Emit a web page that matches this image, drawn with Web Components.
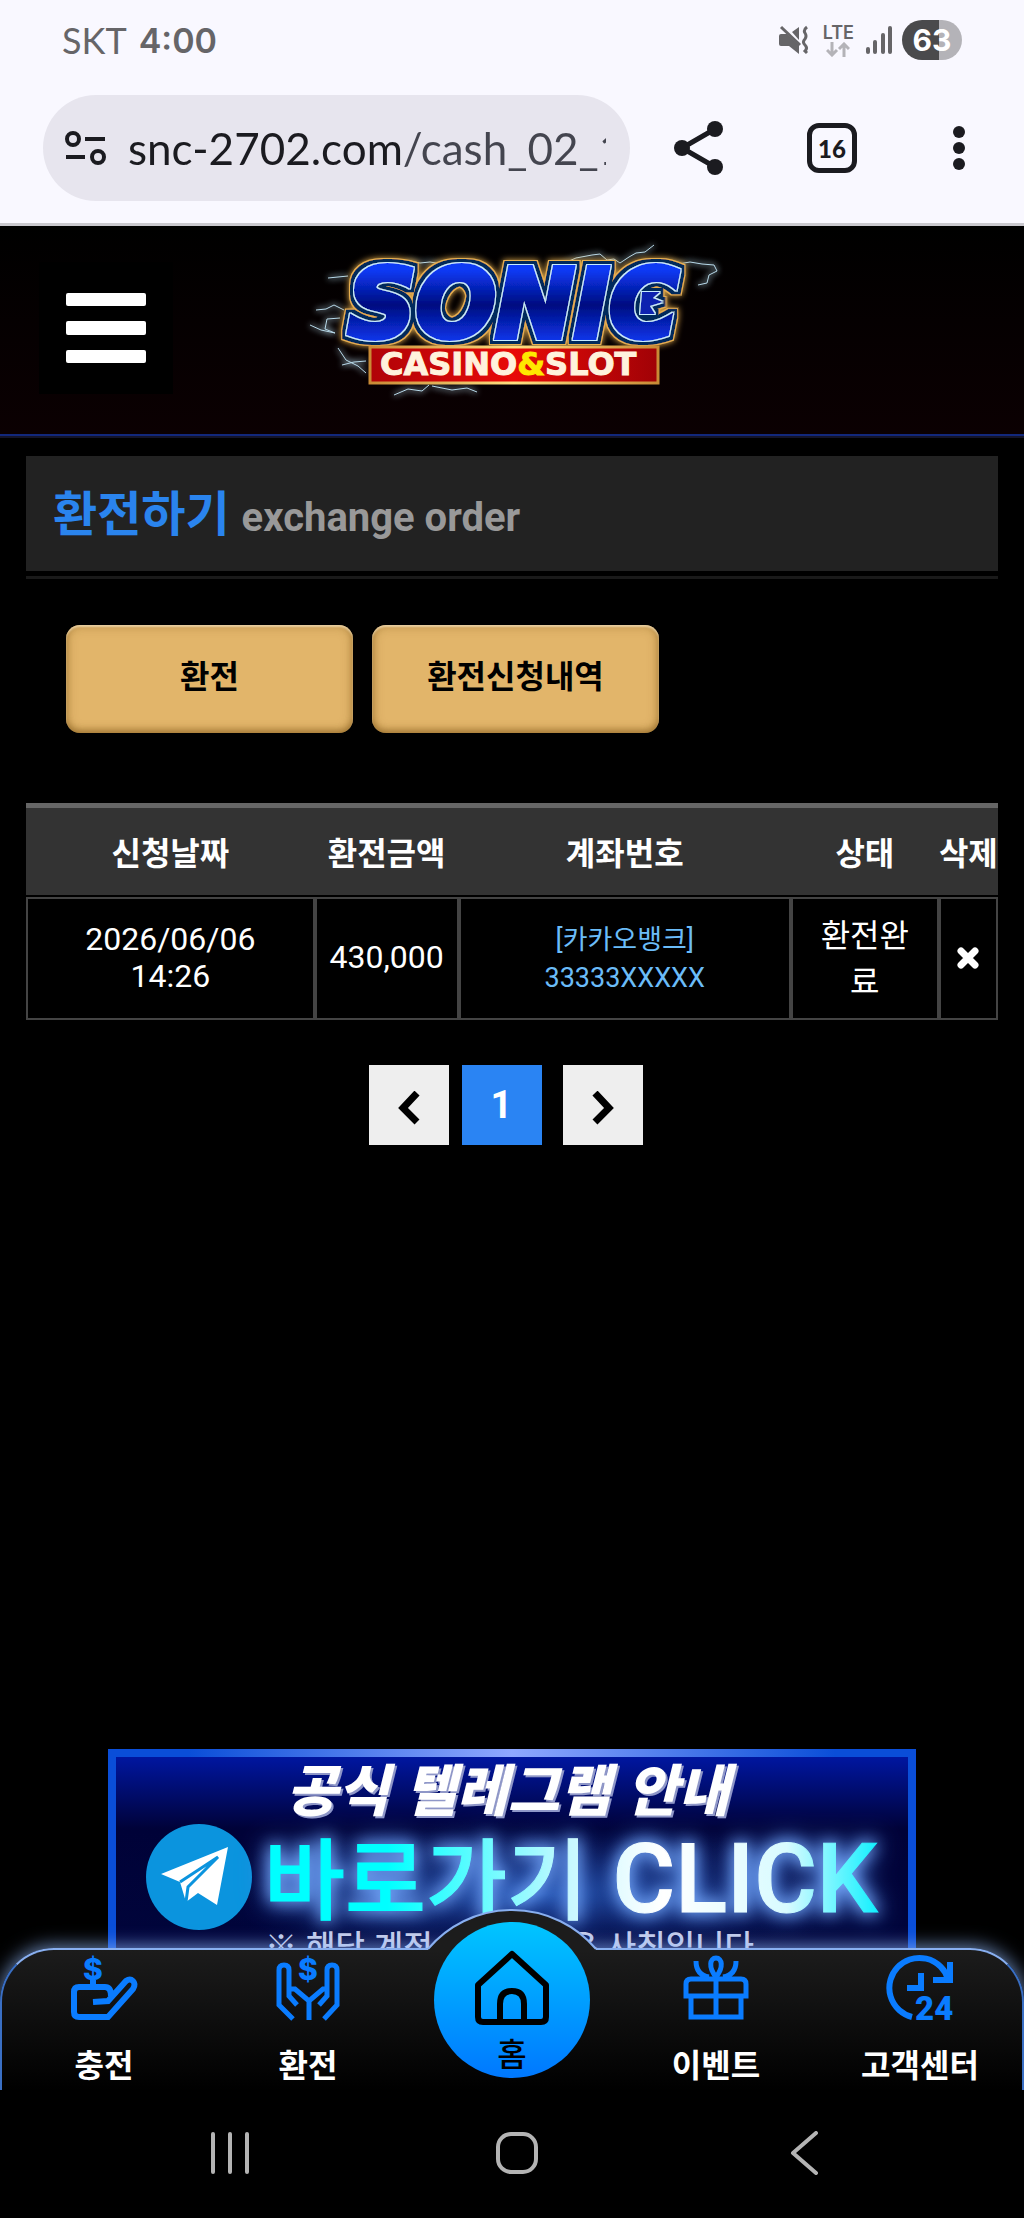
<!DOCTYPE html>
<html lang="ko">
<head>
<meta charset="UTF-8">
<meta name="viewport" content="width=device-width, initial-scale=1.0">
<title>환전하기</title>
<style>
  body {
    margin: 0;
    min-height: 100vh;
    display: flex;
    flex-direction: column;
    background-color: #000;
    color: #fff;
    font-family: Roboto, "Noto Sans CJK KR", sans-serif;
    font-size: 32px;
  }

  main {
    flex: 1;
    padding: 18px 26px 0;
  }

  .tabs {
    display: flex;
    gap: 19px;
    padding: 46px 40px 70px;
  }
</style>
</head>
<body>
<status-bar></status-bar>
<browser-bar></browser-bar>
<site-header></site-header>
<main>
  <page-title>환전하기<span slot="sub">exchange order</span></page-title>
  <div class="tabs">
    <gold-button>환전</gold-button>
    <gold-button>환전신청내역</gold-button>
  </div>
  <exchange-table></exchange-table>
  <page-links></page-links>
</main>
<telegram-banner></telegram-banner>
<bottom-nav></bottom-nav>
<system-bar></system-bar>

<script>
class StatusBar extends HTMLElement {
  constructor() {
    super();
    this.shadowDOM = this.attachShadow({ mode: "open" });
  }

  connectedCallback() {
    this.shadowDOM.innerHTML = `
      <style>
        :host {
          display: flex;
          align-items: center;
          height: 80px;
          padding: 0 62px;
          background-color: #f9f8ff;
          color: #666568;
          font-family: Inter, sans-serif;
          font-size: 36px;
        }
        .carrier {
          font-family: Lato, sans-serif;
          margin-right: 12px;
        }
        .time {
          font-size: 34px;
          font-weight: 600;
          flex: 1;
        }
        svg {
          display: block;
        }
        .lte {
          margin: 0 12px 0 14px;
          font-size: 18px;
          font-weight: 600;
          line-height: 18px;
          text-align: center;
        }
        .lte svg {
          margin: 0 auto;
        }
        .battery {
          margin-left: 10px;
          width: 60px;
          border-radius: 20px;
          background: linear-gradient(to right, #4a4a4c 62%, #b4b3b8 62%);
          color: #fff;
          font-size: 30px;
          font-weight: 700;
          line-height: 40px;
          text-align: center;
        }
      </style>
      <span class="carrier">SKT</span>
      <span class="time">4:00</span>
      <svg width="30" height="30" viewBox="0 0 30 30" fill="#666568">
        <path d="M2 9h6l12 11v9l-10-8H2q-2 0-2-2v-8q0-2 2-2zM20 2v13l-7-8z"/>
        <path d="M2 2l19 18" stroke="#666568" stroke-width="3" fill="none"/>
        <path d="M28 2q-4 3-2 6t0 6q-3 3 0 6t0 6l2 2" stroke="#666568" stroke-width="3" fill="none"/>
      </svg>
      <div class="lte">LTE
        <svg width="24" height="15" viewBox="0 0 24 15" fill="none" stroke="#b4b3b8" stroke-width="3">
          <path d="M6 0v13M1 8l5 5 5-5M18 15V2M13 7l5-5 5 5"/>
        </svg>
      </div>
      <svg width="26" height="28" viewBox="0 0 26 28" fill="#666568">
        <rect x="0" y="21" width="4" height="7" rx="2"/>
        <rect x="7" y="14" width="4" height="14" rx="2"/>
        <rect x="15" y="7" width="4" height="21" rx="2"/>
        <rect x="22" y="0" width="4" height="28" rx="2"/>
      </svg>
      <span class="battery">63</span>
    `;
  }
}
customElements.define("status-bar", StatusBar);

class BrowserBar extends HTMLElement {
  constructor() {
    super();
    this.shadowDOM = this.attachShadow({ mode: "open" });
  }

  connectedCallback() {
    this.shadowDOM.innerHTML = `
      <style>
        :host {
          display: flex;
          align-items: center;
          padding: 15px 43px 22px;
          border-bottom: 3px solid #c9c8ce;
          background-color: #f9f8ff;
          color: #1b1b20;
        }
        .address {
          flex: 1;
          min-width: 0;
          display: flex;
          align-items: center;
          height: 106px;
          box-sizing: border-box;
          padding: 0 24px 0 22px;
          border-radius: 53px;
          background-color: #e7e5ee;
        }
        input {
          flex: 1;
          min-width: 0;
          margin-left: 22px;
          padding: 0;
          border: 0;
          outline: 0;
          font-family: Lato, sans-serif;
          font-size: 44px;
          line-height: 60px;
          color: #44454f;
          background: linear-gradient(to right, #1b1b20 275px, #44454f 275px);
          background-clip: text;
          -webkit-background-clip: text;
          -webkit-text-fill-color: transparent;
        }
        button {
          padding: 0;
          border: 0;
          background: none;
          color: inherit;
        }
        svg {
          display: block;
        }
        .share {
          margin-left: 44px;
        }
        .tabs {
          margin-left: 84px;
          width: 50px;
          height: 50px;
          border: 5px solid #1b1b20;
          border-radius: 12px;
          font-family: Lato, sans-serif;
          font-size: 24px;
          font-weight: 900;
        }
        .more {
          margin: 0 16px 0 96px;
        }
      </style>
      <div class="address">
        <svg width="41" height="34" viewBox="0 0 41 34" fill="none" stroke="#1b1b20" stroke-width="4">
          <circle cx="8" cy="8" r="6"/>
          <circle cx="33" cy="26" r="6"/>
          <path d="M20 8h20M1 26h19"/>
        </svg>
        <input type="text" aria-label="URL" value="snc-2702.com/cash_02_1">
      </div>
      <button class="share" aria-label="share">
        <svg width="49" height="54" viewBox="0 0 49 54" fill="#1b1b20">
          <path d="M41 8L8 27l33 19" fill="none" stroke="#1b1b20" stroke-width="5"/>
          <circle cx="41" cy="8" r="8"/>
          <circle cx="8" cy="27" r="8"/>
          <circle cx="41" cy="46" r="8"/>
        </svg>
      </button>
      <button class="tabs">16</button>
      <button class="more" aria-label="menu">
        <svg width="12" height="44" viewBox="0 0 12 44" fill="#1b1b20">
          <circle cx="6" cy="6" r="6"/>
          <circle cx="6" cy="22" r="6"/>
          <circle cx="6" cy="38" r="6"/>
        </svg>
      </button>
    `;
  }
}
customElements.define("browser-bar", BrowserBar);

class SonicLogo extends HTMLElement {
  constructor() {
    super();
    this.shadowDOM = this.attachShadow({ mode: "open" });
  }

  connectedCallback() {
    this.shadowDOM.innerHTML = `
      <style>
        :host {
          display: block;
        }
        svg {
          display: block;
        }
        .name {
          font-family: "DejaVu Sans", sans-serif;
          font-size: 94px;
          font-weight: 700;
          font-style: italic;
        }
        .sub {
          font-family: "DejaVu Sans", sans-serif;
          font-size: 32px;
          font-weight: 700;
        }
      </style>
      <svg width="450" height="190" viewBox="-3 3 450 190">
        <defs>
          <linearGradient id="blue" x1="0" y1="40" x2="0" y2="110" gradientUnits="userSpaceOnUse">
            <stop offset="0" stop-color="#0a3af5"/>
            <stop offset="0.5" stop-color="#020c80"/>
            <stop offset="1" stop-color="#0a35e8"/>
          </linearGradient>
          <linearGradient id="gold" x1="0" y1="0" x2="1" y2="0">
            <stop offset="0" stop-color="#c98a35"/>
            <stop offset="0.5" stop-color="#ffdf80"/>
            <stop offset="1" stop-color="#c98a35"/>
          </linearGradient>
          <linearGradient id="red" x1="0" y1="0" x2="1" y2="0">
            <stop offset="0" stop-color="#b00308"/>
            <stop offset="0.5" stop-color="#e80a08"/>
            <stop offset="1" stop-color="#a00206"/>
          </linearGradient>
          <filter id="glow" x="-20%" y="-40%" width="140%" height="180%">
            <feGaussianBlur stdDeviation="3" result="b"/>
            <feMerge>
              <feMergeNode in="b"/>
              <feMergeNode in="b"/>
              <feMergeNode in="SourceGraphic"/>
            </feMerge>
          </filter>
          <!-- letter rims, from the inside out: white, navy, gold -->
          <filter id="rims" x="-10%" y="-20%" width="120%" height="140%">
            <feMorphology in="SourceAlpha" operator="dilate" radius="1" result="d1"/>
            <feMorphology in="SourceAlpha" operator="dilate" radius="4" result="d2"/>
            <feMorphology in="SourceAlpha" operator="dilate" radius="5" result="d3"/>
            <feFlood flood-color="#c8ecff"/><feComposite in2="d1" operator="in" result="c1"/>
            <feFlood flood-color="#062a5c"/><feComposite in2="d2" operator="in" result="c2"/>
            <feFlood flood-color="#e8b050"/><feComposite in2="d3" operator="in" result="c3"/>
            <feGaussianBlur in="c3" stdDeviation="3" result="halo"/>
            <feMerge>
              <feMergeNode in="halo"/>
              <feMergeNode in="c3"/>
              <feMergeNode in="c2"/>
              <feMergeNode in="c1"/>
              <feMergeNode in="SourceGraphic"/>
            </feMerge>
          </filter>
        </defs>
        <g fill="none" stroke="#b8daea" stroke-width="1" stroke-linejoin="bevel" filter="url(#glow)">
          <path d="M265 37l14-6 7-3 16-3 8-1 7 6 7-1 6 4 9-6 7-4 9-1 9-7"/>
          <path d="M112 36l8-5 10 2 10-1 12 2M378 32l10 2 12-2 12 2 12 1 3 6-8 4-2 8-9 2"/>
          <path d="M58 46l-20 2M54 80l-10-5-8 4-10 1M50 88l-13 1-2 10 10 4-14-3-11-5"/>
          <path d="M48 118l8 12 12 6 8 7M52 135l12-3 12-1M104 165l14-6 14 2 7-6M142 156l20 4 15-2 10 4"/>
        </g>
        <g filter="url(#rims)">
          <text class="name" x="58" y="107" fill="url(#blue)" stroke="url(#blue)" stroke-width="6">SONIC</text>
          <path d="M352 62l18 0-7 6 10 4-13 4 5 8-15 0z" fill="#0820b0"/>
        </g>
        <rect x="80" y="117" width="288" height="36" fill="url(#red)" stroke="url(#gold)" stroke-width="3"/>
        <text class="sub" x="90" y="145" fill="#fff2dc" stroke="#fff2dc">CASINO<tspan fill="#ffe800" stroke="#ffe800">&amp;</tspan>SLOT</text>
      </svg>
    `;
  }
}
customElements.define("sonic-logo", SonicLogo);

class SiteHeader extends HTMLElement {
  constructor() {
    super();
    this.shadowDOM = this.attachShadow({ mode: "open" });
  }

  connectedCallback() {
    this.shadowDOM.innerHTML = `
      <style>
        :host {
          display: grid;
          grid-template-columns: 1fr auto 1fr;
          align-items: center;
          height: 204px;
          padding-bottom: 6px;
          border-bottom: 2px solid #14142a;
          background: linear-gradient(#000, #0b0002);
          box-shadow: inset 0 -2px #12287c;
        }
        button {
          justify-self: start;
          margin-left: 39px;
          padding: 31px 27px;
          border: 0;
          background-color: #000;
        }
        svg {
          display: block;
        }
      </style>
      <button aria-label="menu">
        <svg width="80" height="70" viewBox="0 0 80 70" fill="#fff">
          <rect width="80" height="13" rx="2"/>
          <rect y="28" width="80" height="14" rx="2"/>
          <rect y="57" width="80" height="13" rx="2"/>
        </svg>
      </button>
      <sonic-logo></sonic-logo>
    `;
  }
}
customElements.define("site-header", SiteHeader);

class PageTitle extends HTMLElement {
  constructor() {
    super();
    this.shadowDOM = this.attachShadow({ mode: "open" });
  }

  connectedCallback() {
    this.shadowDOM.innerHTML = `
      <style>
        :host {
          display: block;
          padding-bottom: 5px;
          border-bottom: 3px solid #1a1a1a;
        }
        h1 {
          margin: 0;
          padding: 3px 27px 0;
          background-color: #222;
          color: #2a84ee;
          font-size: 48px;
          line-height: 112px;
          font-weight: 700;
        }
        small {
          color: #999;
          font-size: 40px;
          line-height: 40px;
        }
      </style>
      <h1><slot></slot> <small><slot name="sub"></slot></small></h1>
    `;
  }
}
customElements.define("page-title", PageTitle);

class GoldButton extends HTMLElement {
  constructor() {
    super();
    this.shadowDOM = this.attachShadow({ mode: "open" });
  }

  connectedCallback() {
    this.shadowDOM.innerHTML = `
      <style>
        :host {
          display: block;
          flex: 0 1 287px;
        }
        button {
          width: 100%;
          height: 108px;
          padding: 0 0 10px;
          border: 0;
          border-radius: 14px;
          background-color: #e2b56a;
          box-shadow: inset 0 2px 2px rgba(255, 240, 210, 0.6), inset 0 -3px 6px rgba(110, 70, 10, 0.4), inset 0 0 12px rgba(110, 70, 10, 0.4);
          color: #000;
          font-family: inherit;
          font-size: 32px;
          font-weight: 700;
        }
      </style>
      <button><slot></slot></button>
    `;
  }
}
customElements.define("gold-button", GoldButton);

class ExchangeTable extends HTMLElement {
  constructor() {
    super();
    this.shadowDOM = this.attachShadow({ mode: "open" });
  }

  connectedCallback() {
    this.shadowDOM.innerHTML = `
      <style>
        :host {
          display: block;
        }
        table {
          width: 100%;
          table-layout: fixed;
          border-collapse: separate;
          border-spacing: 0;
          font-size: 32px;
          text-align: center;
        }
        th {
          height: 85px;
          padding: 0 0 2px;
          border-top: 5px solid #666;
          border-bottom: 2px solid #000;
          background-color: #333;
          white-space: nowrap;
        }
        td {
          height: 117px;
          padding: 0 10px 2px;
          border: 2px solid #444;
          line-height: 37px;
        }
        .account {
          padding-bottom: 0;
          color: #6bbcf8;
          font-size: 27px;
          line-height: 38px;
        }
        .state {
          padding: 0 20px;
          line-height: 46px;
        }
        .delete {
          padding: 0;
        }
        button {
          padding: 0;
          border: 0;
          background: none;
        }
        svg {
          display: block;
        }
      </style>
      <table>
        <colgroup>
          <col style="width: 29.7%"><col style="width: 14.8%"><col style="width: 34.2%"><col style="width: 15.2%"><col style="width: 6.1%">
        </colgroup>
        <thead>
          <tr><th>신청날짜</th><th>환전금액</th><th>계좌번호</th><th>상태</th><th>삭제</th></tr>
        </thead>
        <tbody>
          <tr>
            <td>2026/06/06<br>14:26</td>
            <td>430,000</td>
            <td class="account">[카카오뱅크]<br>33333XXXXX</td>
            <td class="state">환전완료</td>
            <td class="delete">
              <button aria-label="삭제">
                <svg width="22" height="22" viewBox="0 0 22 22" fill="none" stroke="#fff" stroke-width="7" stroke-linecap="round">
                  <path d="M4 4l14 14M18 4L4 18"/>
                </svg>
              </button>
            </td>
          </tr>
        </tbody>
      </table>
    `;
  }
}
customElements.define("exchange-table", ExchangeTable);

class PageLinks extends HTMLElement {
  constructor() {
    super();
    this.shadowDOM = this.attachShadow({ mode: "open" });
  }

  connectedCallback() {
    this.shadowDOM.innerHTML = `
      <style>
        :host {
          display: block;
          margin-top: 45px;
        }
        nav {
          display: flex;
          justify-content: center;
          gap: 13px;
          padding-right: 13px;
        }
        a {
          display: flex;
          align-items: center;
          justify-content: center;
          width: 80px;
          height: 80px;
          background-color: #eee;
          color: #fff;
          font-size: 38px;
          font-weight: 700;
          text-decoration: none;
        }
        svg {
          margin-top: 6px;
        }
        .now {
          margin-right: 8px;
          background-color: #2a84f3;
        }
      </style>
      <nav>
        <a href="#" aria-label="이전">
          <svg width="22" height="34" viewBox="0 0 22 34" fill="none" stroke="#000" stroke-width="7" stroke-linejoin="miter">
            <path d="M19 2L5 17l14 14"/>
          </svg>
        </a>
        <a class="now" href="#">1</a>
        <a href="#" aria-label="다음">
          <svg width="22" height="34" viewBox="0 0 22 34" fill="none" stroke="#000" stroke-width="7" stroke-linejoin="miter">
            <path d="M3 2l14 15L3 31"/>
          </svg>
        </a>
      </nav>
    `;
  }
}
customElements.define("page-links", PageLinks);

class TelegramBanner extends HTMLElement {
  constructor() {
    super();
    this.shadowDOM = this.attachShadow({ mode: "open" });
  }

  connectedCallback() {
    this.shadowDOM.innerHTML = `
      <style>
        :host {
          display: block;
          height: 199px;
          overflow: hidden;
        }
        a {
          display: block;
          width: 808px;
          max-width: 100%;
          margin: 0 auto;
        }
        svg {
          display: block;
          font-family: "Noto Sans CJK KR", sans-serif;
        }
        .title {
          font-size: 56px;
          font-weight: 900;
          font-style: italic;
          filter: drop-shadow(2px 2px 0 #8f97c8);
        }
        .go {
          font-size: 88px;
          font-weight: 500;
          filter: drop-shadow(0 0 8px #7fb0ff) drop-shadow(0 0 12px #4a80e0);
        }
        .click {
          font-family: Roboto, sans-serif;
          font-size: 96px;
        }
        .note {
          font-size: 32px;
          font-weight: 500;
        }
      </style>
      <a href="#">
        <svg width="808" height="240" viewBox="0 0 808 240">
          <defs>
            <linearGradient id="edge" x1="0" y1="0" x2="1" y2="0">
              <stop offset="0.1" stop-color="#0a4ed8"/>
              <stop offset="0.5" stop-color="#8fa8ff"/>
              <stop offset="0.9" stop-color="#0a4ed8"/>
            </linearGradient>
            <linearGradient id="back" x1="0" y1="0" x2="0" y2="1">
              <stop offset="0" stop-color="#0016a0"/>
              <stop offset="0.3" stop-color="#000238"/>
              <stop offset="1" stop-color="#01063c"/>
            </linearGradient>
            <linearGradient id="cyan" x1="0" y1="0" x2="1" y2="0">
              <stop offset="0.2" stop-color="#0ff"/>
              <stop offset="0.5" stop-color="#c8f8ff"/>
              <stop offset="0.65" stop-color="#fff"/>
              <stop offset="0.85" stop-color="#d8fbff"/>
              <stop offset="1" stop-color="#10f0ff"/>
            </linearGradient>
            <radialGradient id="haze">
              <stop offset="0" stop-color="#2a62c8" stop-opacity="0.8"/>
              <stop offset="1" stop-color="#03105a" stop-opacity="0"/>
            </radialGradient>
          </defs>
          <rect width="808" height="260" fill="#0a4ed8"/>
          <rect width="808" height="8" fill="url(#edge)"/>
          <rect x="8" y="8" width="792" height="240" fill="url(#back)"/>
          <ellipse cx="430" cy="145" rx="330" ry="75" fill="url(#haze)"/>
          <text class="title" x="178" y="62" fill="#fff">공식 텔레그램 안내</text>
          <circle cx="91" cy="128" r="53" fill="#0b94de"/>
          <path d="M53 125l67-27-11 58-19-12-12 9-6-20z" fill="#fff"/>
          <path d="M72 133l38-25-30 30-2 15" fill="none" stroke="#0b94de" stroke-width="3"/>
          <text class="go" x="156" y="163" fill="url(#cyan)" stroke="url(#cyan)">바로가기 <tspan class="click">CLICK</tspan></text>
          <text class="note" x="157" y="209" fill="#c5cdea">※ 해당 계정 이외 계정은 사칭입니다</text>
        </svg>
      </a>
    `;
  }
}
customElements.define("telegram-banner", TelegramBanner);

class NavItem extends HTMLElement {
  constructor() {
    super();
    this.shadowDOM = this.attachShadow({ mode: "open" });
  }

  connectedCallback() {
    this.shadowDOM.innerHTML = `
      <style>
        :host {
          display: block;
          flex: 1;
        }
        a {
          display: flex;
          flex-direction: column;
          align-items: center;
          gap: 22px;
          padding-top: 5px;
          color: #fff;
          font-size: 32px;
          font-weight: 700;
          line-height: 46px;
          text-decoration: none;
        }
      </style>
      <a href="#"><slot name="icon"></slot><slot></slot></a>
    `;
  }
}
customElements.define("nav-item", NavItem);

class BottomNav extends HTMLElement {
  constructor() {
    super();
    this.shadowDOM = this.attachShadow({ mode: "open" });
  }

  connectedCallback() {
    this.shadowDOM.innerHTML = `
      <style>
        :host {
          display: block;
          position: relative;
        }
        nav {
          display: flex;
          height: 140px;
          border: 2px solid #3a6fc4;
          border-top-color: #88aff0;
          border-bottom: 0;
          border-radius: 54px 54px 0 0;
          background: linear-gradient(#1c1c1c, #000);
          box-shadow: 0 -2px 18px rgba(150, 190, 255, 0.7);
        }
        svg {
          display: block;
          overflow: visible;
        }
        .bump {
          position: absolute;
          left: 50%;
          top: -38px;
          margin-left: -84px;
        }
        .center {
          flex: 1;
        }
        .home {
          position: absolute;
          left: 50%;
          top: -26px;
          margin-left: -78px;
          box-sizing: border-box;
          width: 156px;
          height: 156px;
          padding-top: 29px;
          border-radius: 50%;
          background: linear-gradient(#00c6ff, #0078ff);
          display: flex;
          flex-direction: column;
          align-items: center;
          gap: 8px;
          color: #000;
          font-size: 32px;
          font-weight: 500;
          line-height: 42px;
          text-decoration: none;
        }
        .sign {
          font-family: Inter, sans-serif;
          font-size: 30px;
          font-weight: 800;
        }
        .hours {
          font-family: Roboto, sans-serif;
          font-size: 33px;
          font-weight: 900;
        }
      </style>
      <nav>
        <nav-item>
          <svg slot="icon" width="66" height="66" viewBox="0 0 66 66" fill="none" stroke="#0a7cff" stroke-width="6">
            <text class="sign" x="12" y="25" fill="#0a7cff" stroke="none">$</text>
            <path d="M22 25v7M22 47l15-1L55 26q4-3 7 0t0 8L37 62H8q-5 0-5-5V37q0-5 5-5h26q6 0 6 9"/>
          </svg>
          충전
        </nav-item>
        <nav-item>
          <svg slot="icon" width="66" height="66" viewBox="0 0 66 66" fill="none" stroke="#0a7cff" stroke-width="5">
            <text class="sign" x="23" y="25" fill="#0a7cff" stroke="none">$</text>
            <path d="M18 64L4 50V15q0-5 5-5t5 5v26l8 9M14 34h6l14 12 14-12h4M34 45v20M49 64l13-14V15q0-5-5-5t-5 5v26l-8 9"/>
          </svg>
          환전
        </nav-item>
        <div class="center"></div>
        <nav-item>
          <svg slot="icon" width="66" height="66" viewBox="0 0 66 66" fill="none" stroke="#0a7cff" stroke-width="5">
            <path d="M8 42v20h50V42M33 22v40M3 41V29q0-5 5-5h50q5 0 5 5v12zM33 22C25 12 27 3 33 3s8 9 0 19M13 6q0 14 13 16M53 6q0 14-13 16"/>
          </svg>
          이벤트
        </nav-item>
        <nav-item>
          <svg slot="icon" width="66" height="66" viewBox="0 0 66 66" fill="none" stroke="#0a7cff" stroke-width="6">
            <path d="M25 62A30 30 0 1 1 61 24M63 7v18H46M34 18v15H20"/>
            <text class="hours" x="28" y="65" fill="#0a7cff" stroke="none">24</text>
          </svg>
          고객센터
        </nav-item>
      </nav>
      <svg class="bump" width="168" height="44" viewBox="0 0 168 44">
        <path d="M0 42V39A110 110 0 0 1 168 39V42z" fill="#1c1c1c"/>
        <path d="M0 39A110 110 0 0 1 168 39" fill="none" stroke="#88aff0" stroke-width="2"/>
      </svg>
      <a class="home" href="#">
        <svg width="76" height="75" viewBox="0 0 76 75" fill="none" stroke="#000" stroke-width="6" stroke-linejoin="round">
          <path d="M38 3L4 34v32q0 5 5 5h58q5 0 5-5V34zM26 70V53q0-13 12-13t12 13v17"/>
        </svg>
        홈
      </a>
    `;
  }
}
customElements.define("bottom-nav", BottomNav);

class SystemBar extends HTMLElement {
  constructor() {
    super();
    this.shadowDOM = this.attachShadow({ mode: "open" });
  }

  connectedCallback() {
    this.shadowDOM.innerHTML = `
      <style>
        :host {
          display: flex;
          align-items: center;
          justify-content: space-between;
          height: 126px;
          padding: 0 198px 2px 208px;
          position: relative;
          background-color: #000;
        }
        button {
          padding: 0;
          border: 0;
          background: none;
        }
        svg {
          display: block;
        }
      </style>
      <button aria-label="recents">
        <svg width="44" height="44" viewBox="0 0 44 44" stroke="#b4b4b4" stroke-width="4" stroke-linecap="round">
          <path d="M5 3v38M22 3v38M39 3v38"/>
        </svg>
      </button>
      <button aria-label="home">
        <svg width="44" height="44" viewBox="0 0 44 44" fill="none" stroke="#b4b4b4" stroke-width="4">
          <rect x="3" y="3" width="38" height="38" rx="13"/>
        </svg>
      </button>
      <button aria-label="back">
        <svg width="44" height="44" viewBox="0 0 44 44" fill="none" stroke="#b4b4b4" stroke-width="4" stroke-linecap="round" stroke-linejoin="round">
          <path d="M34 2L11 22l23 20"/>
        </svg>
      </button>
    `;
  }
}
customElements.define("system-bar", SystemBar);
</script>
</body>
</html>
